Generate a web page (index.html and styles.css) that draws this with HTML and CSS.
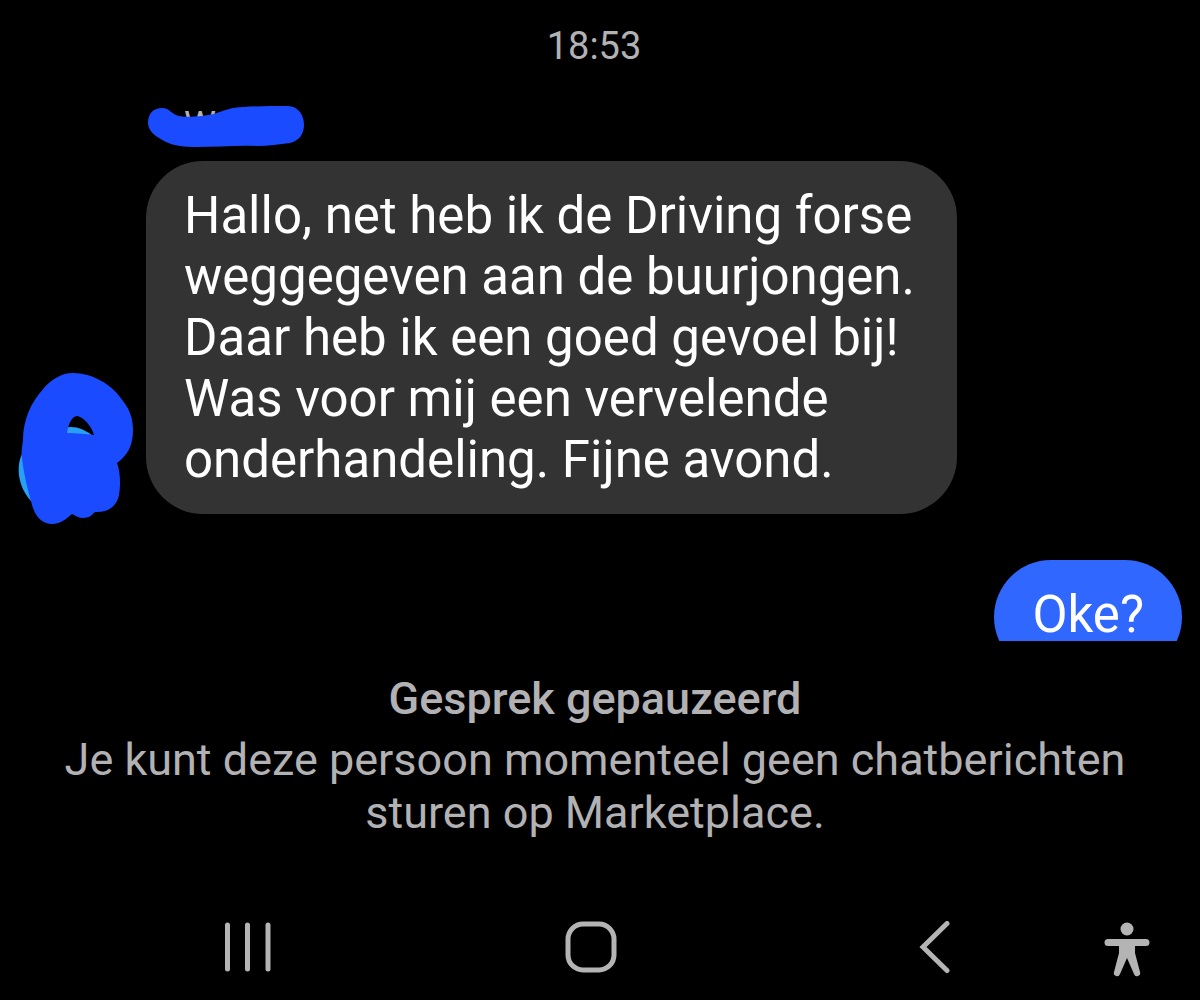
FILE: index.html
```html
<!DOCTYPE html>
<html lang="nl">
<head>
<meta charset="utf-8">
<meta name="viewport" content="width=device-width, initial-scale=1">
<title>Marketplace chat</title>
<link rel="stylesheet" href="styles.css">
</head>
<body>
<main class="chat">
  <time class="chat-time" datetime="18:53">18:53</time>
  <svg class="sender" viewBox="146 104 160 46" aria-hidden="true">
    <text class="sender-name" x="184" y="137">W</text>
    <path class="marker" d="M148 123C148 113 154 108 162 108C170 108 172 115 179 116C190 118 203 116 214 114C223 111 231 107 243 107C258 106 274 106 288 106C298 106 304 115 304 125C304 134 299 141 290 143C279 144 269 146 257 146C237 145 217 147 197 147C185 147 174 146 166 142C156 137 148 131 148 123Z"/>
  </svg>
  <div class="row">
    <svg class="avatar" viewBox="16 372 120 154" aria-hidden="true">
      <path class="photo" d="M22 454C17 464 16 484 31 501L38 480ZM64 428Q79 424 94 437L70 440Z"/>
      <path class="marker" fill-rule="evenodd" d="M73 373C60 373 50 381 44 388C31 402 23 420 23 440C22 448 21 453 22 458C24 476 28 490 31 501C34 516 42 524 52 524C61 524 67 518 72 514C76 516 79 518 83 518C89 518 92 515 95 512C108 513 117 506 119 495C121 484 120 471 117 463C128 455 133 445 133 430C133 417 129 409 123 401C112 384 92 373 73 373ZM67 433C68 425 72 416 77 416C84 417 92 427 94 435C86 434 77 433 67 433Z"/>
    </svg>
    <p class="bubble received">Hallo, net heb ik de Driving forse<br>weggegeven aan de buurjongen.<br>Daar heb ik een goed gevoel bij!<br>Was voor mij een vervelende<br>onderhandeling. Fijne avond.</p>
  </div>
  <p class="bubble sent">Oke?</p>
</main>
<footer class="footer">
  <section class="notice">
    <h1 class="notice-title">Gesprek gepauzeerd</h1>
    <p class="notice-text">Je kunt deze persoon momenteel geen chatberichten sturen op Marketplace.</p>
  </section>
  <nav class="nav">
    <button class="nav-button" type="button" aria-label="Recente apps">
      <svg class="icon" viewBox="0 0 52 56"><path class="line" d="M5.500 4V48M25.500 4V48M46 4V48"/></svg>
    </button>
    <button class="nav-button" type="button" aria-label="Startscherm">
      <svg class="icon" viewBox="0 0 52 56"><rect class="line" x="3" y="3" width="46" height="46" rx="15"/></svg>
    </button>
    <button class="nav-button" type="button" aria-label="Terug">
      <svg class="icon" viewBox="0 0 52 56"><path class="line" d="M38 2.500L14 26L38 49.500"/></svg>
    </button>
    <button class="nav-button" type="button" aria-label="Toegankelijkheid">
      <svg class="icon" viewBox="0 0 52 56"><circle class="solid" cx="27" cy="8" r="6.500"/><path class="solid" d="M8 18H46A3.400 3.400 0 0 1 46 25H35V32L40 51A3 3 0 0 1 34 53L27 37L20 53A3 3 0 0 1 14 51L19 32V25H8A3.400 3.400 0 0 1 8 18Z"/></svg>
    </button>
  </nav>
</footer>
</body>
</html>
```
FILE: styles.css
```css
* {
  box-sizing: border-box;
}

body {
  display: flex;
  flex-direction: column;
  height: 100vh;
  margin: 0;
  background: #000;
  color: #b2b2b4;
  font-family: Roboto, "Liberation Sans", sans-serif;
}

p,
h1 {
  margin: 0;
}

.chat {
  display: flex;
  flex: 1 1 0;
  flex-direction: column;
  min-height: 0;
  overflow: hidden;
  padding: 24px 18px 0 16px;
}

.chat > * {
  flex-shrink: 0;
}

.chat-time {
  align-self: center;
  padding-right: 10px;
  font-size: 38px;
  line-height: 44px;
}

.sender {
  width: 160px;
  height: 46px;
  margin: 36px 0 11px 130px;
}

.sender-name {
  fill: #b4b4b4;
  font-size: 36px;
}

.marker {
  fill: #1a4bff;
}

.photo {
  fill: #28a0f5;
}

.row {
  display: flex;
  align-items: flex-end;
  gap: 10px;
}

.avatar {
  flex: none;
  width: 120px;
  height: 154px;
}

.bubble {
  padding: 24px 38px;
  border-radius: 57px;
  color: #fff;
  font-size: 51px;
  line-height: 61px;
}

.received {
  margin-bottom: 12px;
  padding-right: 42px;
  background: #333;
}

.sent {
  align-self: flex-end;
  margin-top: 34px;
  padding-bottom: 29px;
  background: #3067ff;
}

.footer {
  padding-top: 31px;
}

.notice {
  padding: 0 50px 0 40px;
  text-align: center;
}

.notice-title {
  margin-bottom: 8px;
  font-size: 45px;
  font-weight: 500;
  line-height: 53px;
}

.notice-text {
  font-size: 45px;
  line-height: 53px;
}

.nav {
  display: grid;
  grid-template-columns: 343fr 344fr 191fr 52px;
  padding: 80px 48px 21px 222px;
}

.nav-button {
  width: 52px;
  height: 60px;
  padding: 0;
  border: 0;
  background: none;
  color: #b4b4b4;
}

.icon {
  display: block;
  width: 52px;
  height: 56px;
}

.line {
  fill: none;
  stroke: currentColor;
  stroke-linecap: round;
  stroke-width: 5px;
}

.solid {
  fill: currentColor;
}
```
